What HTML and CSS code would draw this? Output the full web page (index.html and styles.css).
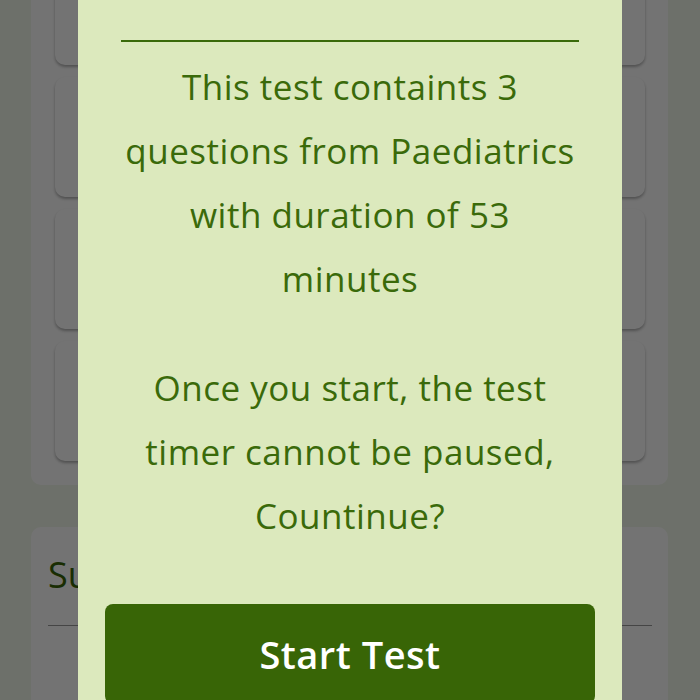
FILE: index.html
```html
<!DOCTYPE html>
<html lang="en">
<head>
  <meta charset="UTF-8">
  <meta name="viewport" content="width=device-width, initial-scale=1.0">
  <title>Paediatrics Test</title>
  <link rel="stylesheet" href="styles.css">
</head>
<body>
  <main class="page">
    <section class="card test-list">
      <div class="test-item"></div>
      <div class="test-item"></div>
      <div class="test-item"></div>
      <div class="test-item"></div>
    </section>

    <section class="card subjects">
      <h2>Subjects</h2>
      <hr>
    </section>
  </main>

  <div class="overlay">
    <div class="modal">
      <hr class="modal-rule">
      <p>This test containts 3 questions from Paediatrics with duration of 53 minutes</p>
      <p>Once you start, the test timer cannot be paused, Countinue?</p>
      <button class="start-btn">Start Test</button>
    </div>
  </div>
</body>
</html>
```

FILE: styles.css
```css
body {
  font-family: "Open Sans", "Noto Sans", sans-serif;
  margin: 0;
  padding: 0;
  background: #f2f9ec;
  overflow: hidden;
}
.page {
  padding: 0 32px 0 31px;
}
.card {
  background: #ffffff;
  border-radius: 10px;
}
.test-list {
  margin-top: -79px;
  padding: 24px 23px 24px 24px;
  display: flex;
  flex-direction: column;
  gap: 12px;
}
.test-item {
  height: 120px;
  background: #ffffff;
  border-radius: 10px;
  box-shadow: 0 2px 3px rgba(0, 0, 0, 0.3);
}
.subjects {
  margin-top: 42px;
  padding: 24px 16px 40px 17px;
  height: 200px;
}
.subjects h2 {
  margin: 0;
  font-size: 36px;
  font-weight: 500;
  line-height: 48px;
  color: #386506;
}
.subjects hr {
  margin: 26px 0 0;
  border: none;
  border-top: 1px solid #9a9a9a;
}
.overlay {
  position: fixed;
  inset: 0;
  background: rgba(0, 0, 0, 0.55);
  display: flex;
  justify-content: center;
  align-items: flex-start;
}
.modal {
  width: 544px;
  box-sizing: border-box;
  margin-top: -40px;
  padding: 80px 27px 40px;
  background: #dce9bd;
  color: #3a6a0a;
  text-align: center;
}
.modal-rule {
  margin: 0 16px 13px;
  border: none;
  border-top: 2px solid #3a6a0a;
}
.modal p {
  margin: 0 18px 45px;
  font-size: 35px;
  line-height: 64px;
  letter-spacing: 0.5px;
}
.start-btn {
  display: flex;
  align-items: center;
  justify-content: center;
  width: 100%;
  height: 100px;
  margin-top: 56px;
  border: none;
  border-radius: 8px;
  background: #386506;
  color: #ffffff;
  font-family: inherit;
  font-size: 38px;
  font-weight: 600;
  letter-spacing: 0.5px;
  cursor: pointer;
}
```
